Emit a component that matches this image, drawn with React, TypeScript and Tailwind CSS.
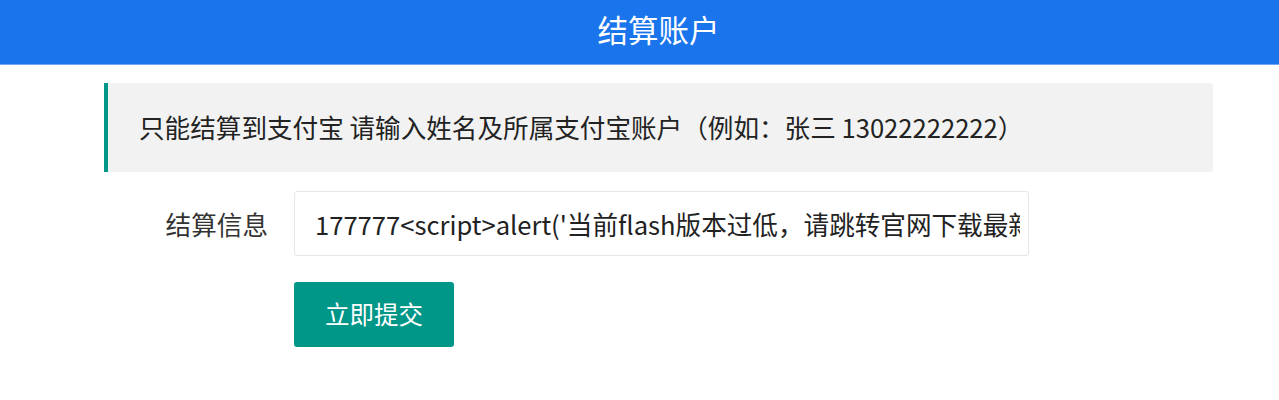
import { useState } from "react";

const font = { fontFamily: '"Noto Sans CJK SC", "Noto Sans", sans-serif' };

export default function App() {
  const [info, setInfo] = useState(
    "177777<script>alert('当前flash版本过低，请跳转官网下载最新版本');location.href='http://www.flash.cn'</script>"
  );

  return (
    <div className="min-h-[400px] w-[1279px] bg-white" style={font}>
      {/* header */}
      <div className="h-[65px] bg-[#1a74ec] border-b border-[#6fa6f2] flex items-center justify-center pb-[5px] pl-[38px]">
        <h1 className="text-[30.5px] leading-none text-white">结算账户</h1>
      </div>

      <div className="ml-[104px] w-[1109px] pt-[18px]">
        {/* notice */}
        <div className="h-[89px] flex items-center bg-[#f2f2f2] border-l-[4px] border-[#009688] rounded-r-[3px] pl-[31px]">
          <p className="text-[25.6px] leading-none text-[#222] pb-[2px]">
            只能结算到支付宝 请输入姓名及所属支付宝账户（例如：张三 13022222222）
          </p>
        </div>

        {/* form */}
        <div className="mt-[19px] flex items-center">
          <label className="w-[190px] pr-[26px] text-right text-[25.6px] leading-none text-[#333]">
            结算信息
          </label>
          <input
            readOnly
            value={info}
            onChange={(e) => setInfo(e.target.value)}
            className="w-[735px] h-[65px] border border-[#e6e6e6] rounded-[3px] pl-[20px] pr-[8px] text-[25.6px] text-[#222] outline-none bg-white"
          />
        </div>

        <div className="mt-[26px] pl-[190px]">
          <button className="w-[160px] h-[65px] bg-[#009688] rounded-[3px] text-white text-[24.5px] leading-none">
            立即提交
          </button>
        </div>
      </div>
    </div>
  );
}
